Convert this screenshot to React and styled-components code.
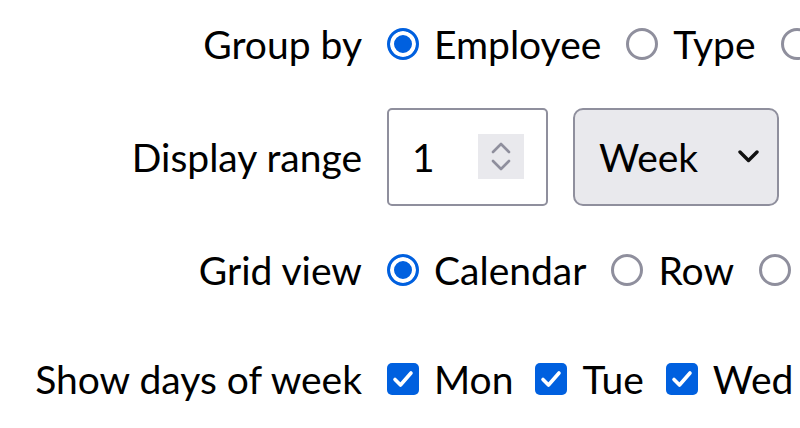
import styled, { createGlobalStyle } from 'styled-components';

const GlobalStyle = createGlobalStyle`
  html, body {
    margin: 0;
    padding: 0;
    background: #ffffff;
    overflow: hidden;
  }
  body {
    font-family: Lato, "Noto Sans", sans-serif;
    font-size: 39px;
    color: #000;
  }
`;

const Form = styled.form`
  display: flex;
  flex-direction: column;
  width: 800px;
`;

const Row = styled.div`
  display: flex;
  align-items: center;
  height: ${props => props.h}px;
  white-space: nowrap;
`;

const Label = styled.label`
  flex: 0 0 362px;
  text-align: right;
  margin-right: 25px;
`;

const Options = styled.div`
  display: flex;
  align-items: center;
  gap: ${props => props.gap || 25}px;
`;

const Option = styled.label`
  display: flex;
  align-items: center;
  gap: 15px;
`;

const Radio = styled.span`
  box-sizing: border-box;
  flex: 0 0 32px;
  width: 32px;
  height: 32px;
  border-radius: 50%;
  border: 3px solid ${props => (props.checked ? '#0060df' : '#8f8f9d')};
  background: ${props => (props.checked ? '#0060df' : '#fff')};
  box-shadow: ${props => (props.checked ? 'inset 0 0 0 4px #fff' : 'none')};
`;

const Check = styled.span`
  flex: 0 0 32px;
  width: 32px;
  height: 32px;
  border-radius: 5px;
  background: #0060df;
  display: flex;
  align-items: center;
  justify-content: center;
`;

const Controls = styled.div`
  display: flex;
  gap: 25px;
`;

const NumberBox = styled.div`
  box-sizing: border-box;
  width: 161px;
  height: 98px;
  border: 2px solid #8f8f9d;
  border-radius: 5px;
  display: flex;
  align-items: center;
  padding: 0 22px 0 23px;
  background: #fff;

  input {
    width: 60px;
    border: none;
    outline: none;
    font: inherit;
    padding: 0;
    background: transparent;
  }
`;

const Spin = styled.div`
  margin-left: auto;
  width: 46px;
  height: 45px;
  background: #e9e9ed;
  display: flex;
  flex-direction: column;
  align-items: center;
  justify-content: center;
  gap: 5px;
`;

const Select = styled.div`
  box-sizing: border-box;
  width: 206px;
  height: 98px;
  border: 2px solid #8f8f9d;
  border-radius: 10px;
  background: #e9e9ed;
  display: flex;
  align-items: center;
  justify-content: space-between;
  padding: 0 18px 0 24px;
`;

const CheckMark = () => (
  <svg width="22" height="20" viewBox="0 0 22 20">
    <path d="M3 10.5 L8.5 16 L19 4" fill="none" stroke="#fff" strokeWidth="3.6" strokeLinecap="round" strokeLinejoin="round" />
  </svg>
);

const Chevron = ({ up, size = 16, color = '#8f8f9d', width = 2.6 }) => (
  <svg width={size + 4} height={size / 2 + 4} viewBox={`0 0 ${size + 4} ${size / 2 + 4}`}>
    <path
      d={up
        ? `M2 ${size / 2 + 2} L${size / 2 + 2} 2 L${size + 2} ${size / 2 + 2}`
        : `M2 2 L${size / 2 + 2} ${size / 2 + 2} L${size + 2} 2`}
      fill="none"
      stroke={color}
      strokeWidth={width}
      strokeLinecap="round"
      strokeLinejoin="round"
    />
  </svg>
);

function RadioGroup({ items, selected }) {
  return (
    <Options>
      {items.map((item, i) => (
        <Option key={i}>
          <Radio checked={item === selected} />
          {item && <span>{item}</span>}
        </Option>
      ))}
    </Options>
  );
}

export default function App() {
  return (
    <>
      <GlobalStyle />
      <Form onSubmit={e => e.preventDefault()}>
        <Row h={88}>
          <Label>Group by</Label>
          <RadioGroup items={['Employee', 'Type', '']} selected="Employee" />
        </Row>
        <Row h={137}>
          <Label>Display range</Label>
          <Controls>
            <NumberBox>
              <input type="text" defaultValue="1" />
              <Spin>
                <Chevron up />
                <Chevron />
              </Spin>
            </NumberBox>
            <Select>
              <span>Week</span>
              <Chevron size={17} color="#111" width={3.4} />
            </Select>
          </Controls>
        </Row>
        <Row h={89}>
          <Label>Grid view</Label>
          <RadioGroup items={['Calendar', 'Row', '']} selected="Calendar" />
        </Row>
        <Row h={130}>
          <Label>Show days of week</Label>
          <Options gap={22}>
            {['Mon', 'Tue', 'Wed'].map(d => (
              <Option key={d}>
                <Check><CheckMark /></Check>
                <span>{d}</span>
              </Option>
            ))}
          </Options>
        </Row>
      </Form>
    </>
  );
}
